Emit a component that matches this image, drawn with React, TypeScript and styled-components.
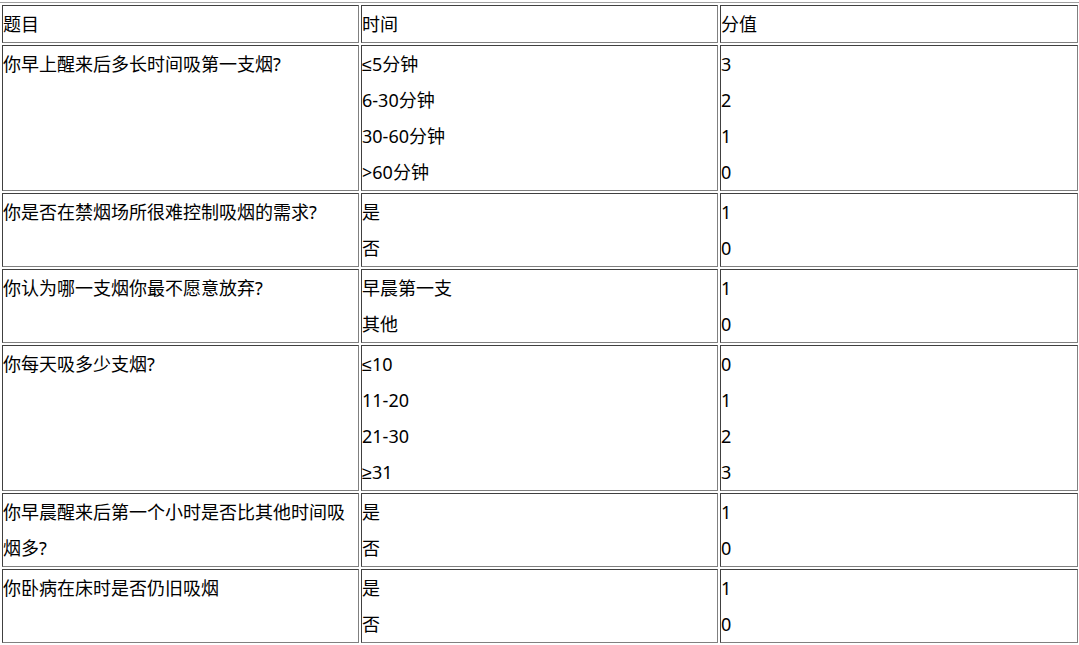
import styled, { createGlobalStyle } from 'styled-components';

type Row = {
    question: string;
    options: { label: string; score: string }[];
};

const rows: Row[] = [
    {
        question: '你早上醒来后多长时间吸第一支烟?',
        options: [
            { label: '≤5分钟', score: '3' },
            { label: '6-30分钟', score: '2' },
            { label: '30-60分钟', score: '1' },
            { label: '>60分钟', score: '0' },
        ],
    },
    {
        question: '你是否在禁烟场所很难控制吸烟的需求?',
        options: [
            { label: '是', score: '1' },
            { label: '否', score: '0' },
        ],
    },
    {
        question: '你认为哪一支烟你最不愿意放弃?',
        options: [
            { label: '早晨第一支', score: '1' },
            { label: '其他', score: '0' },
        ],
    },
    {
        question: '你每天吸多少支烟?',
        options: [
            { label: '≤10', score: '0' },
            { label: '11-20', score: '1' },
            { label: '21-30', score: '2' },
            { label: '≥31', score: '3' },
        ],
    },
    {
        question: '你早晨醒来后第一个小时是否比其他时间吸烟多?',
        options: [
            { label: '是', score: '1' },
            { label: '否', score: '0' },
        ],
    },
    {
        question: '你卧病在床时是否仍旧吸烟',
        options: [
            { label: '是', score: '1' },
            { label: '否', score: '0' },
        ],
    },
];

const App = () => {
    return (
        <>
            <GlobalStyle />
            <STable>
                <colgroup>
                    <col style={{ width: 357 }} />
                    <col style={{ width: 357 }} />
                    <col style={{ width: 358 }} />
                </colgroup>
                <thead>
                    <tr>
                        <SCell>
                            <SText>题目</SText>
                        </SCell>
                        <SCell>
                            <SText>时间</SText>
                        </SCell>
                        <SCell>
                            <SText>分值</SText>
                        </SCell>
                    </tr>
                </thead>
                <tbody>
                    {rows.map((row) => (
                        <tr key={row.question}>
                            <SCell>
                                <SText>{row.question}</SText>
                            </SCell>
                            <SCell>
                                {row.options.map((o) => (
                                    <SText key={o.label}>{o.label}</SText>
                                ))}
                            </SCell>
                            <SCell>
                                {row.options.map((o, i) => (
                                    <SText key={i}>{o.score}</SText>
                                ))}
                            </SCell>
                        </tr>
                    ))}
                </tbody>
            </STable>
        </>
    );
};

export default App;

const GlobalStyle = createGlobalStyle`
    html, body {
        margin: 0;
        padding: 0;
        overflow: hidden;
        background: #ffffff;
    }
    body {
        font-family: "Noto Sans", "Liberation Sans", "Noto Sans CJK SC", sans-serif;
        font-size: 18px;
        color: #000000;
    }
`;

const STable = styled.table`
    table-layout: fixed;
    width: 1082px;
    margin: 2px 0 0 -1px;
    border-collapse: separate;
    border-spacing: 2px;
    border: 1px solid;
    border-color: #a0a0a0 #808080 #808080 #a0a0a0;
`;

const SCell = styled.td`
    vertical-align: top;
    padding: 0;
    border: 1px solid;
    border-color: #404040 #808080 #808080 #404040;
    text-align: left;
    word-break: break-all;
`;

const SText = styled.div`
    line-height: 36px;
`;
